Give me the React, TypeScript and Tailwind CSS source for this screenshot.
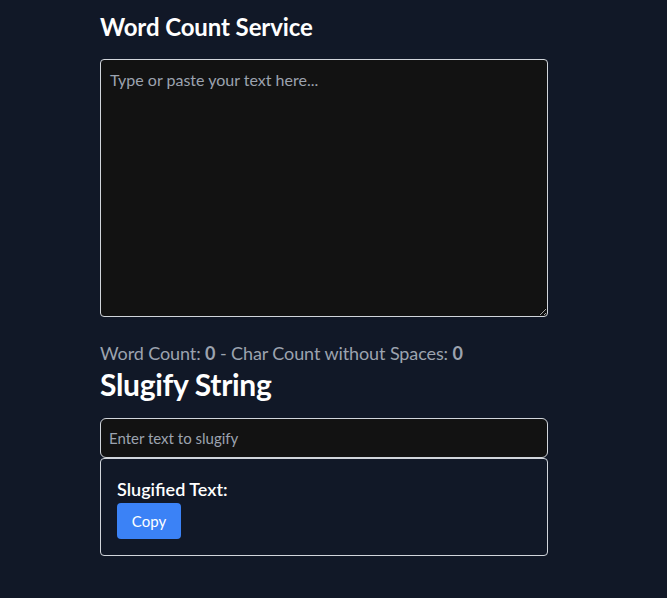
import React from "react";

export default function App() {
  return (
    <div className="min-h-[598px] bg-[#111827] text-white" style={{ fontFamily: "Lato, 'Noto Sans', sans-serif" }}>
      <div className="ml-[100px] w-[448px] pt-[12px]">
        <h1 className="text-[24px] font-bold leading-[30px] tracking-[-0.1px]">Word Count Service</h1>
        <textarea
          className="mt-[17px] block h-[258px] w-full resize-y rounded-[4px] border border-[#d1d5db] bg-[#121212] px-[9px] py-[8px] text-[16px] text-white placeholder:text-[#9ca3af] outline-none"
          placeholder="Type or paste your text here..."
        />
        <p className="mt-[23px] text-[18px] leading-[26px] tracking-[-0.1px] text-[#9ca3af]">
          Word Count: <span className="font-bold">0</span> - Char Count without Spaces: <span className="font-bold">0</span>
        </p>
        <h2 className="text-[30px] font-bold leading-[36px] tracking-[-0.3px]">Slugify String</h2>
        <input
          className="mt-[16px] block h-[40px] w-full rounded-[6px] border border-[#d1d5db] bg-[#121212] px-[8px] text-[15px] text-white placeholder:text-[#9ca3af] outline-none"
          placeholder="Enter text to slugify"
        />
        <div className="rounded-[4px] border border-[#d1d5db] px-[16px] pb-[16px] pt-[19px]">
          <p className="text-[18px] font-semibold leading-[22px]">Slugified Text:</p>
          <button className="mt-[3px] h-[36px] w-[64px] rounded-[4px] bg-[#3b82f6] text-[15px] text-white">Copy</button>
        </div>
      </div>
    </div>
  );
}
